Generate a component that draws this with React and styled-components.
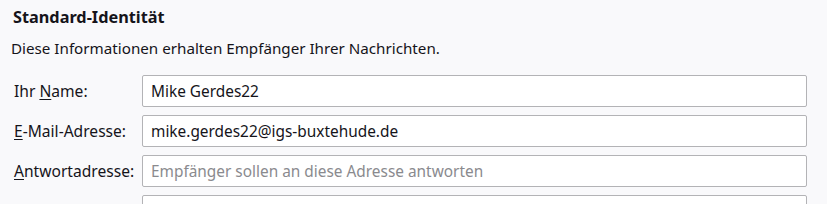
import React from 'react'
import styled, { createGlobalStyle } from 'styled-components'

const GlobalStyle = createGlobalStyle`
  html, body {
    margin: 0;
    padding: 0;
    background: #f9f9fb;
  }
  body {
    font-family: "Noto Sans", "DejaVu Sans", sans-serif;
    color: #15141a;
  }
`

const Page = styled.div`
  width: 827px;
  height: 204px;
  overflow: hidden;
  padding: 6px 0 0 0;
  box-sizing: border-box;
`

const Title = styled.h2`
  margin: 0 0 0 13px;
  font-size: 16.3px;
  font-weight: 700;
  line-height: 22px;
`

const Description = styled.p`
  margin: 10px 0 0 11px;
  font-size: 15.2px;
  line-height: 20px;
`

const Form = styled.div`
  display: grid;
  grid-template-columns: 128px 665px;
  row-gap: 8px;
  align-items: center;
  margin: 17px 0 0 14px;
`

const Label = styled.label`
  font-size: 15.6px;
  u {
    text-decoration: underline;
    text-underline-offset: 2px;
  }
`

const Input = styled.input`
  height: 32px;
  box-sizing: border-box;
  border: 1px solid #b3b3b6;
  border-radius: 2px;
  background: #fff;
  padding: 0 8px;
  font-family: inherit;
  font-size: 15.4px;
  color: #15141a;
  outline: none;
  &::placeholder {
    color: #8a8a8e;
  }
`

const fields = [
  { key: 'N', before: 'Ihr ', after: 'ame:', value: 'Mike Gerdes22' },
  { key: 'E', before: '', after: '-Mail-Adresse:', value: 'mike.gerdes22@igs-buxtehude.de' },
  { key: 'A', before: '', after: 'ntwortadresse:', placeholder: 'Empfänger sollen an diese Adresse antworten' },
  { key: '', before: '', after: '', value: '' },
]

export default function App() {
  return (
    <>
      <GlobalStyle />
      <Page>
        <Title>Standard-Identität</Title>
        <Description>Diese Informationen erhalten Empfänger Ihrer Nachrichten.</Description>
        <Form>
          {fields.map((f, i) => (
            <React.Fragment key={i}>
              <Label>
                {f.before}
                {f.key && <u>{f.key}</u>}
                {f.after}
              </Label>
              <Input readOnly defaultValue={f.value} placeholder={f.placeholder} />
            </React.Fragment>
          ))}
        </Form>
      </Page>
    </>
  )
}
